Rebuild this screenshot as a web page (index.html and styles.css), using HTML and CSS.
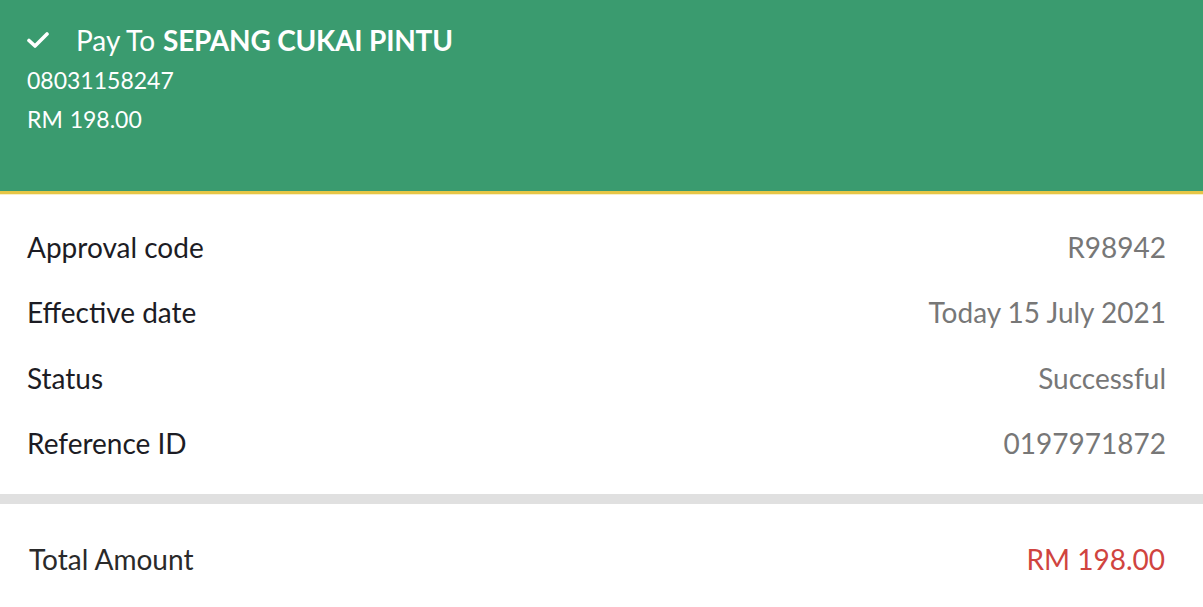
FILE: index.html
```html
<!DOCTYPE html>
<html>
<head>
<meta charset="utf-8">
<link rel="stylesheet" href="styles.css">
</head>
<body>
<div class="header">
  <div class="title">
    <svg class="check" width="22" height="16" viewBox="0 0 22 16"><path d="M2 8.5 L8 14 L20 2" fill="none" stroke="#fff" stroke-width="3.6" stroke-linecap="round" stroke-linejoin="round"/></svg>
    <span class="payto">Pay To</span><span class="name">SEPANG CUKAI PINTU</span>
  </div>
  <div class="sub">08031158247</div>
  <div class="sub">RM 198.00</div>
</div>
<div class="details">
  <div class="row"><span class="label">Approval code</span><span class="value">R98942</span></div>
  <div class="row"><span class="label">Effective date</span><span class="value">Today 15 July 2021</span></div>
  <div class="row"><span class="label">Status</span><span class="value">Successful</span></div>
  <div class="row"><span class="label">Reference ID</span><span class="value">0197971872</span></div>
</div>
<div class="sep"></div>
<div class="total">
  <span class="label">Total Amount</span><span class="amount">RM 198.00</span>
</div>
</body>
</html>
```
FILE: styles.css
```css
html, body {
  margin: 0;
  padding: 0;
  background: #fff;
  font-family: Lato, "Open Sans", sans-serif;
}
.header {
  background: #3a9b6f;
  box-sizing: border-box;
  height: 194px;
  border-bottom: 3px solid #e6c646;
  box-shadow: 0 1px 0 #f8efc8;
  padding: 19px 27px 0;
  color: #fff;
}
.title {
  display: flex;
  align-items: center;
  height: 42px;
  font-size: 28px;
}
.check {
  margin-right: 27px;
}
.payto {
  margin-right: 8px;
}
.name {
  font-weight: 700;
  letter-spacing: -0.2px;
}
.sub {
  font-size: 23px;
  line-height: 39px;
  word-spacing: 1px;
}
.details {
  padding: 20px 37px 18px 27px;
}
.row {
  display: flex;
  justify-content: space-between;
  align-items: center;
  height: 65.5px;
  font-size: 28px;
}
.label {
  color: #1c1c24;
}
.value {
  color: #777;
}
.sep {
  height: 10px;
  background: #e0e0e0;
}
.total {
  display: flex;
  justify-content: space-between;
  align-items: center;
  padding: 6px 38px 0 29px;
  height: 103px;
  box-sizing: border-box;
  font-size: 28px;
}
.total .label {
  color: #2a2a2a;
}
.amount {
  color: #d0443f;
}
```
